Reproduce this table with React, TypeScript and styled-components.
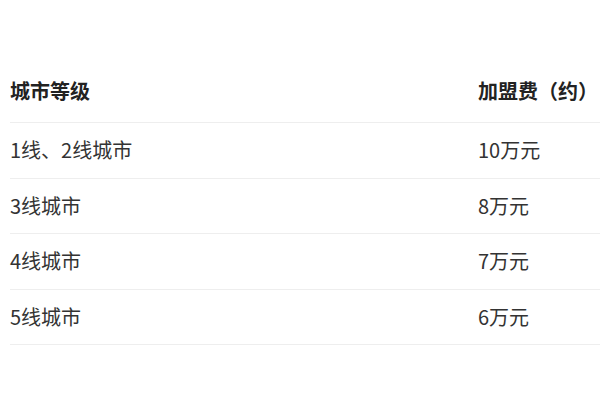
import React from 'react';
import styled, { createGlobalStyle } from 'styled-components';

const rows = [
  { level: '1线、2线城市', fee: '10万元' },
  { level: '3线城市', fee: '8万元' },
  { level: '4线城市', fee: '7万元' },
  { level: '5线城市', fee: '6万元' },
];

const GlobalStyle = createGlobalStyle`
  body {
    margin: 0;
    background: #ffffff;
    font-family: "Noto Sans CJK SC", "Noto Sans", sans-serif;
  }
`;

const Page = styled.div`
  padding: 63px 0 0 10px;
  width: 600px;
  box-sizing: border-box;
  overflow: hidden;
`;

const Table = styled.table`
  width: 100%;
  border-collapse: collapse;
  color: #333333;
  font-size: 20px;
`;

const HeadCell = styled.th<{ $wide?: boolean }>`
  width: ${(p) => (p.$wide ? '468px' : 'auto')};
  height: 55px;
  padding: 0 0 4px 0;
  text-align: left;
  font-weight: bold;
  color: #222222;
  vertical-align: middle;
  border-bottom: 1px solid #eeeeee;
  line-height: 1;
`;

const Cell = styled.td`
  height: 54.5px;
  padding: 0;
  text-align: left;
  vertical-align: middle;
  border-bottom: 1px solid #eeeeee;
  line-height: 1;
`;

export default function App() {
  return (
    <>
      <GlobalStyle />
      <Page>
        <Table>
          <thead>
            <tr>
              <HeadCell $wide>城市等级</HeadCell>
              <HeadCell>加盟费（约）</HeadCell>
            </tr>
          </thead>
          <tbody>
            {rows.map((row) => (
              <tr key={row.level}>
                <Cell>{row.level}</Cell>
                <Cell>{row.fee}</Cell>
              </tr>
            ))}
          </tbody>
        </Table>
      </Page>
    </>
  );
}
